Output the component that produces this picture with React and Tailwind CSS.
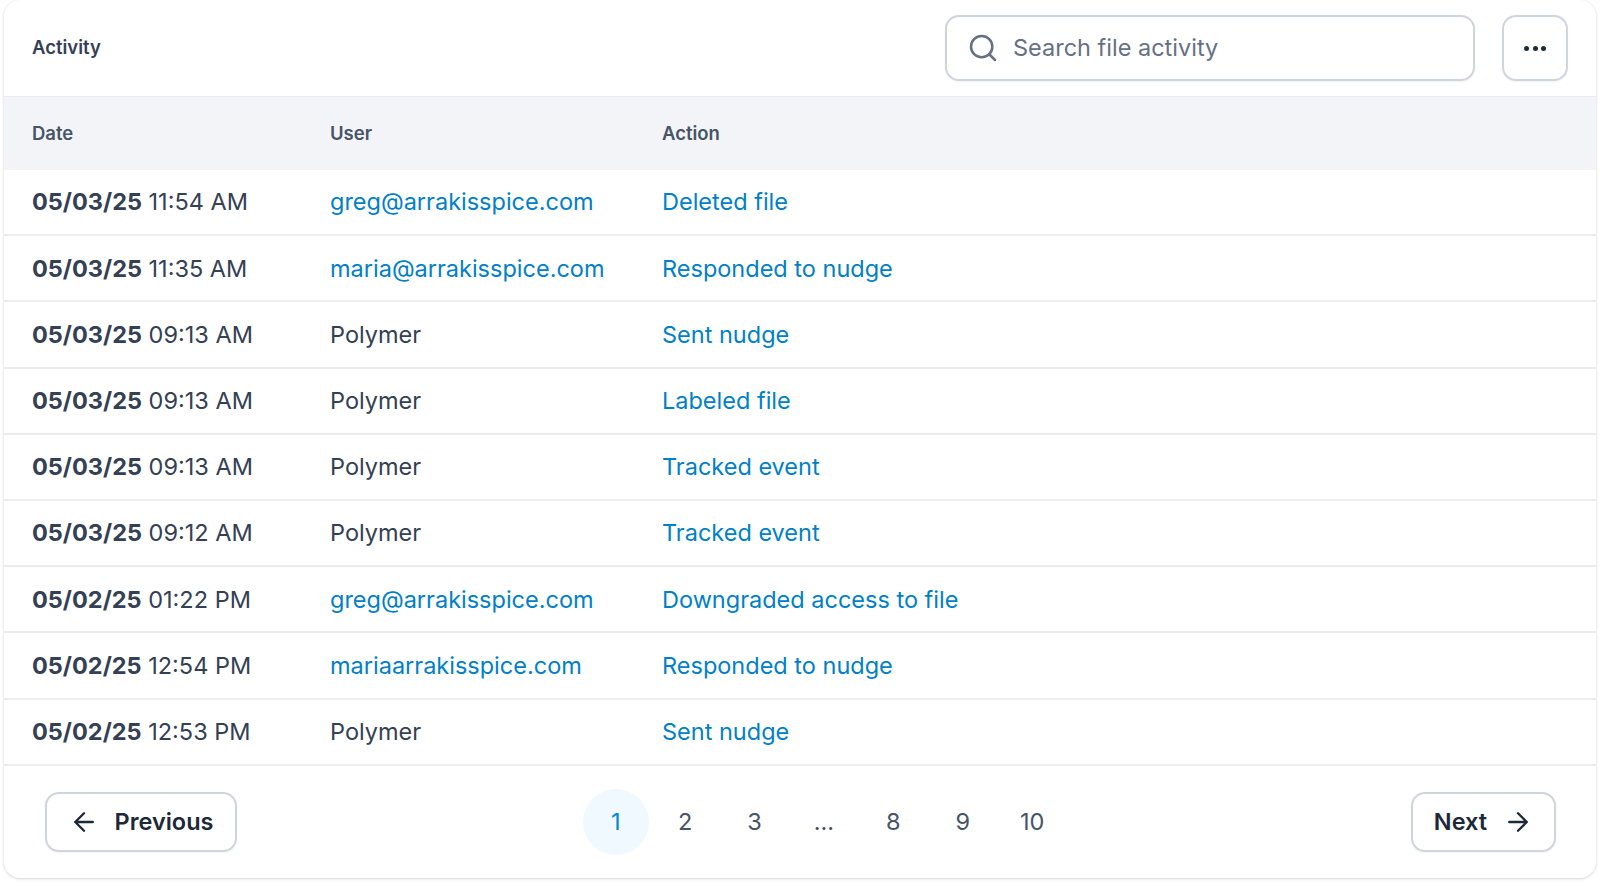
import React from "react";

const rows = [
  ["05/03/25", "11:54 AM", "greg@arrakisspice.com", true, "Deleted file"],
  ["05/03/25", "11:35 AM", "maria@arrakisspice.com", true, "Responded to nudge"],
  ["05/03/25", "09:13 AM", "Polymer", false, "Sent nudge"],
  ["05/03/25", "09:13 AM", "Polymer", false, "Labeled file"],
  ["05/03/25", "09:13 AM", "Polymer", false, "Tracked event"],
  ["05/03/25", "09:12 AM", "Polymer", false, "Tracked event"],
  ["05/02/25", "01:22 PM", "greg@arrakisspice.com", true, "Downgraded access to file"],
  ["05/02/25", "12:54 PM", "mariaarrakisspice.com", true, "Responded to nudge"],
  ["05/02/25", "12:53 PM", "Polymer", false, "Sent nudge"],
];
const pages = ["1", "2", "3", "...", "8", "9", "10"];

export default function App() {
  return (
    <div className="h-[884px] bg-white px-[4px] pb-[6px] font-['Inter',sans-serif] antialiased">
      <div className="h-full rounded-[16px] bg-white shadow-[0_1px_3px_rgba(16,24,40,0.16),0_0_2px_rgba(16,24,40,0.06)] overflow-hidden flex flex-col">
        <div className="h-[97px] flex items-center justify-between pl-[28px] pr-[28px] border-b border-[#e9ebf2]">
          <div className="text-[18.5px] font-semibold text-[#344054]">Activity</div>
          <div className="flex items-center gap-[27px]">
            <div className="w-[530px] h-[66px] rounded-[14px] border-2 border-[#d0d5dd] flex items-center pl-[20px] gap-[14px] shadow-[0_1px_2px_rgba(16,24,40,0.05)]">
              <svg width="32" height="32" viewBox="0 0 24 24" fill="none" stroke="#667085" strokeWidth="1.9" strokeLinecap="round" strokeLinejoin="round">
                <circle cx="11" cy="11" r="8" />
                <path d="M21 21l-4.3-4.3" />
              </svg>
              <span className="text-[23.5px] text-[#667085]">Search file activity</span>
            </div>
            <div className="w-[66px] h-[66px] rounded-[14px] border-2 border-[#d0d5dd] flex items-center justify-center gap-[3.5px] shadow-[0_1px_2px_rgba(16,24,40,0.05)]">
              <span className="w-[5px] h-[5px] rounded-full bg-[#1d2939]" />
              <span className="w-[5px] h-[5px] rounded-full bg-[#1d2939]" />
              <span className="w-[5px] h-[5px] rounded-full bg-[#1d2939]" />
            </div>
          </div>
        </div>
        <div className="h-[73px] bg-[#f2f4f7] grid grid-cols-[298px_332px_1fr] items-center pl-[28px] text-[18.5px] font-semibold text-[#475467]">
          <div>Date</div>
          <div>User</div>
          <div>Action</div>
        </div>
        {rows.map((r, i) => (
          <div key={i} className="h-[66.2px] shrink-0 grid grid-cols-[298px_332px_1fr] items-center pl-[28px] border-b-2 border-[#eaecf0] text-[23.5px]">
            <div className="text-[#344054]">
              <span className="font-bold text-[#344054]">{r[0]}</span> {r[1]}
            </div>
            <div className={r[3] ? "text-[#0080c9]" : "text-[#344054]"}>{r[2]}</div>
            <div className="text-[#0080c9]">{r[4]}</div>
          </div>
        ))}
        <div className="flex-1 relative flex items-center justify-between pl-[41px] pr-[40px]">
          <div className="w-[192px] h-[60px] rounded-[14px] border-2 border-[#d0d5dd] flex items-center justify-center gap-[16px] text-[#1d2939] font-semibold text-[23.5px] shadow-[0_1px_2px_rgba(16,24,40,0.05)]">
            <svg width="30" height="30" viewBox="0 0 24 24" fill="none" stroke="#1d2939" strokeWidth="1.9" strokeLinecap="round" strokeLinejoin="round">
              <path d="M19 12H5M12 19l-7-7 7-7" />
            </svg>
            Previous
          </div>
          <div className="flex items-center">
            {pages.map((p, i) => (
              <div key={i} className={`w-[69.4px] h-[66px] flex items-center justify-center text-[23.5px] ${i === 0 ? "text-[#0086d6]" : "text-[#475467]"}`}>
                <span className={`w-[66px] h-[66px] rounded-full flex items-center justify-center ${i === 0 ? "bg-[#f0f9ff]" : ""}`}>{p}</span>
              </div>
            ))}
          </div>
          <div className="w-[145px] h-[60px] rounded-[14px] border-2 border-[#d0d5dd] flex items-center justify-center gap-[16px] text-[#1d2939] font-semibold text-[23.5px] shadow-[0_1px_2px_rgba(16,24,40,0.05)]">
            Next
            <svg width="30" height="30" viewBox="0 0 24 24" fill="none" stroke="#1d2939" strokeWidth="1.9" strokeLinecap="round" strokeLinejoin="round">
              <path d="M5 12h14M12 5l7 7-7 7" />
            </svg>
          </div>
        </div>
      </div>
    </div>
  );
}
